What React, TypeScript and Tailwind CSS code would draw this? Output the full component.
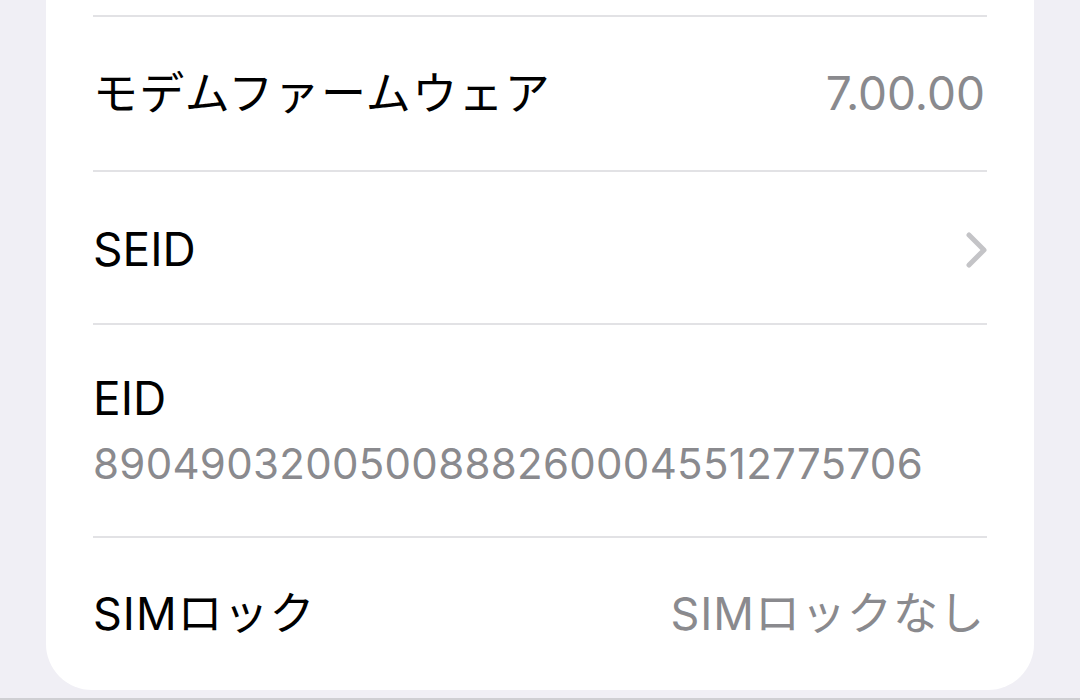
const font = { fontFamily: '"Inter", "Noto Sans CJK JP", sans-serif' };

function Chevron() {
  return (
    <svg width="24" height="36" viewBox="0 0 24 36" fill="none" className="mr-[-2px]">
      <polyline
        points="4,3 19,18 4,33"
        stroke="#c4c4c7"
        strokeWidth="5"
        strokeLinecap="round"
        strokeLinejoin="round"
      />
    </svg>
  );
}

export default function App() {
  return (
    <div className="h-[700px] w-[1080px] overflow-hidden bg-[#f0eff5] flex flex-col" style={font}>
      <div className="mx-[46px] bg-white rounded-b-[46px] pt-[15px]">
        {/* モデムファームウェア */}
        <div className="px-[47px]">
          <div className="border-t-2 border-[#e2e2e5] h-[155px] flex items-center justify-between">
            <span className="text-[45px] text-black tracking-[1.3px]">モデムファームウェア</span>
            <span className="text-[46px] text-[#8a8a8e] mr-[2px]">7.00.00</span>
          </div>
        </div>

        {/* SEID */}
        <div className="px-[47px]">
          <div className="border-t-2 border-[#e2e2e5] h-[153px] flex items-center justify-between pt-[4px]">
            <span className="text-[46px] text-black">SEID</span>
            <Chevron />
          </div>
        </div>

        {/* EID */}
        <div className="px-[47px]">
          <div className="border-t-2 border-[#e2e2e5] h-[213px] flex flex-col justify-center gap-[16px] pb-[2px]">
            <span className="text-[46px] text-black leading-[52px]">EID</span>
            <span className="text-[42px] text-[#8a8a8e] leading-[48px] tracking-[0.3px]">89049032005008882600045512775706</span>
          </div>
        </div>

        {/* SIMロック */}
        <div className="px-[47px]">
          <div className="border-t-2 border-[#e2e2e5] h-[154px] flex items-center justify-between">
            <span className="text-[45px] text-black tracking-[1px]">SIMロック</span>
            <span className="text-[45px] text-[#8a8a8e] tracking-[1px] mr-[2px]">SIMロックなし</span>
          </div>
        </div>
      </div>
      <div className="flex-1" />
      <div className="h-[2px] bg-[#cfcfd3]" />
    </div>
  );
}
